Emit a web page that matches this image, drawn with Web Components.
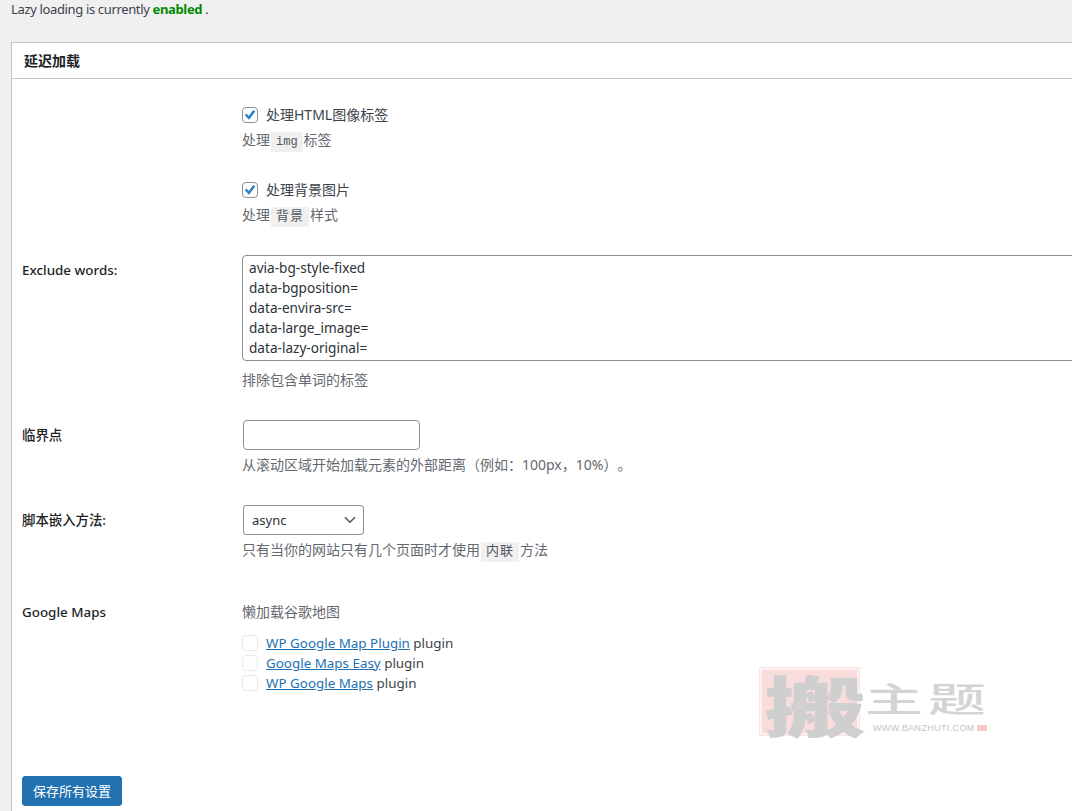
<!DOCTYPE html>
<html lang="zh">
<head>
<meta charset="utf-8">
<title>延迟加载</title>
<style>
	html, body { margin: 0; height: 811px; overflow: hidden; }
	body {
		position: relative;
		background: #f0f0f1;
		color: #3c434a;
		font: 13px/20px "Noto Sans", "Noto Sans CJK SC", sans-serif;
	}
</style>
</head>
<body>
<lazy-notice>Lazy loading is currently <b>enabled</b> .</lazy-notice>

<settings-card heading="延迟加载">
	<setting-row style="margin-top: 26px">
		<check-option checked>处理HTML图像标签</check-option>
		<field-desc style="margin-top: 4px">处理<code-tag>img</code-tag>标签</field-desc>
	</setting-row>
	<setting-row style="margin-top: 28px">
		<check-option checked>处理背景图片</check-option>
		<field-desc style="margin-top: 4px">处理<code-tag wide>背景</code-tag>样式</field-desc>
	</setting-row>
	<setting-row label="Exclude words:" style="margin-top: 28px">
		<words-box>avia-bg-style-fixed
data-bgposition=
data-envira-src=
data-large_image=
data-lazy-original=
data-lazy-src=
data-lazy-srcset=</words-box>
		<field-desc style="margin-top: 8px">排除包含单词的标签</field-desc>
	</setting-row>
	<setting-row label="临界点" style="margin-top: 30px">
		<text-box></text-box>
		<field-desc style="margin-top: 4px">从滚动区域开始加载元素的外部距离（例如：100px，10%）。</field-desc>
	</setting-row>
	<setting-row label="脚本嵌入方法:" style="margin-top: 30px">
		<select-box>async</select-box>
		<field-desc style="margin-top: 4px">只有当你的网站只有几个页面时才使用<code-tag wide>内联</code-tag>方法</field-desc>
	</setting-row>
	<setting-row label="Google Maps" style="margin-top: 39px; --label-top: 1px">
		<field-desc>懒加载谷歌地图</field-desc>
		<plugin-list style="margin-top: 11px">
			<check-option disabled><a href="#">WP Google Map Plugin</a> plugin</check-option>
			<check-option disabled><a href="#">Google Maps Easy</a> plugin</check-option>
			<check-option disabled><a href="#">WP Google Maps</a> plugin</check-option>
		</plugin-list>
	</setting-row>
	<save-button style="margin-top: 83px">保存所有设置</save-button>
</settings-card>

<brand-mark></brand-mark>

<script>
(() => {
	const define = (name, css, html, extra = {}) => {
		customElements.define(name, class extends HTMLElement {
			constructor() {
				super();
				this.attachShadow({ mode: 'open' });
				this.shadowRoot.innerHTML = `<style>${css}</style>${html}`;
			}

			connectedCallback() {
				if (extra.ready) extra.ready(this);
			}
		});
	};

	define('lazy-notice', `
		:host { display: block; height: 42px; padding-left: 11px; font-size: 13px; letter-spacing: -.35px; line-height: 18px; }
		::slotted(b) { color: #008a00; font-weight: 700; }
	`, '<slot></slot>');

	define('settings-card', `
		:host {
			display: block;
			box-sizing: border-box;
			width: 1200px;
			height: 769px;
			margin-left: 11px;
			background: #fff;
			border: 1px solid #c3c4c7;
			border-bottom: 0;
		}
		header {
			height: 35px;
			padding-left: 12px;
			border-bottom: 1px solid #c3c4c7;
			color: #1d2327;
			font-size: 14px;
			font-weight: 700;
			line-height: 35px;
		}
		.body { padding: 0 0 0 10px; }
	`, '<header></header><div class="body"><slot></slot></div>', {
		ready: (el) => { el.shadowRoot.querySelector('header').textContent = el.getAttribute('heading'); },
	});

	define('setting-row', `
		:host { display: grid; grid-template-columns: 220px 1fr; }
		.label {
			padding-top: var(--label-top, 5px);
			color: #1d2327;
			font-size: 13.4px;
			font-weight: 500;
			line-height: 20px;
		}
		.field { min-width: 0; }
	`, '<div class="label"></div><div class="field"><slot></slot></div>', {
		ready: (el) => { el.shadowRoot.querySelector('.label').textContent = el.getAttribute('label') || ''; },
	});

	const tick = `<svg viewBox="0 0 16 16" width="16" height="16" fill="none" stroke="#2b7fc4" stroke-width="2.8" stroke-linecap="square"><path d="M4 8.3l2.8 2.9 5.2-7"/></svg>`;

	define('check-option', `
		:host { display: flex; align-items: center; height: 20px; font-size: 14px; line-height: 20px; color: #3c434a; }
		.box {
			flex: none;
			box-sizing: border-box;
			width: 16px;
			height: 16px;
			margin-right: 8px;
			background: #fff;
			border: 1px solid #8c8f94;
			border-radius: 4px;
			display: flex;
			align-items: center;
			justify-content: center;
		}
		.box svg { width: 14px; height: 14px; display: none; }
		:host([checked]) .box svg { display: block; }
		:host([disabled]) .box { border-color: #e9e9ea; }
		:host([disabled]) { font-size: 13.4px; }
		::slotted(a) { color: #2271b1; text-decoration: underline; }
	`, `<span class="box">${tick}</span><span><slot></slot></span>`);

	define('plugin-list', ':host { display: block; }', '<slot></slot>');

	define('field-desc', `
		:host { display: block; color: #646970; font-size: 14px; line-height: 21px; text-spacing-trim: space-all; }
	`, '<slot></slot>');

	define('code-tag', `
		:host {
			display: inline-block;
			margin: 0 1px;
			padding: 0 5px;
			background: #f0f0f1;
			color: #50575e;
			font: 12px/20px "Liberation Mono", "Noto Sans CJK SC", monospace;
		}
		:host([wide]) { font-size: 13px; letter-spacing: 1px; }
	`, '<slot></slot>');

	define('words-box', `
		:host { display: block; }
		textarea {
			display: block;
			box-sizing: border-box;
			width: 1000px;
			height: 106px;
			margin: 0;
			padding: 2px 6px 2px;
			overflow: hidden;
			resize: none;
			background: #fff;
			border: 1px solid #8c8f94;
			border-radius: 4px;
			color: #2c3338;
			font: 13.6px/20px "Noto Sans", sans-serif;
		}
	`, '<textarea spellcheck="false"></textarea>', {
		ready: (el) => { el.shadowRoot.querySelector('textarea').value = el.textContent; },
	});

	define('text-box', `
		:host { display: block; margin-left: 1px; }
		input {
			display: block;
			box-sizing: border-box;
			width: 177px;
			height: 30px;
			margin: 0;
			background: #fff;
			border: 1px solid #8c8f94;
			border-radius: 4px;
		}
	`, '<input type="text">');

	define('select-box', `
		:host {
			display: flex;
			align-items: center;
			justify-content: space-between;
			box-sizing: border-box;
			width: 121px;
			height: 30px;
			margin-left: 1px;
			padding: 0 7px 0 8px;
			background: #fff;
			border: 1px solid #8c8f94;
			border-radius: 3px;
			color: #2c3338;
			font-size: 13px;
		}
		svg { display: block; }
	`, '<slot></slot><svg viewBox="0 0 12 8" width="12" height="8" fill="none" stroke="#50575e" stroke-width="1.6"><path d="M1 1.2l5 5 5-5"/></svg>');

	define('save-button', `
		:host {
			display: block;
			box-sizing: border-box;
			width: 100px;
			height: 30px;
			background: #2271b1;
			border: 1px solid #2271b1;
			border-radius: 3px;
			color: #fff;
			font-size: 13px;
			line-height: 28px;
			text-align: center;
		}
	`, '<slot></slot>');

	// the banzhuti watermark sits over the card
	define('brand-mark', `
		:host {
			position: absolute;
			left: 760px;
			top: 668px;
			width: 228px;
			height: 70px;
			pointer-events: none;
			font-family: "Noto Sans CJK SC", sans-serif;
		}
		.seal {
			position: absolute;
			left: 0;
			top: 0;
			box-sizing: border-box;
			width: 99px;
			height: 67px;
			background: #f9dcdc;
			border: 2px solid #fdf1f1;
			outline: 1px solid #fbe3e3;
		}
		.big {
			position: absolute;
			left: 4px;
			top: 2px;
			color: #cfcfcf;
			font-size: 66px;
			font-weight: 900;
			line-height: 66px;
			transform: scaleX(1.55);
			transform-origin: left top;
		}
		.name {
			position: absolute;
			left: 105px;
			top: 10px;
			color: #d4d4d4;
			font-size: 34px;
			font-weight: 500;
			letter-spacing: 3px;
			line-height: 40px;
			white-space: nowrap;
			transform: scaleX(1.7);
			transform-origin: left top;
		}
		.url {
			position: absolute;
			left: 113px;
			top: 54px;
			color: #c4c4c4;
			font: 9px/12px "Liberation Sans", sans-serif;
			letter-spacing: .35px;
			white-space: nowrap;
		}
		.dot {
			position: absolute;
			left: 217px;
			top: 57px;
			width: 10px;
			height: 6px;
			background: #f8c9c9;
		}
	`, '<div class="seal"></div><div class="big">搬</div><div class="name">主题</div><div class="url">WWW.BANZHUTI.COM</div><div class="dot"></div>');
})();
</script>
</body>
</html>
